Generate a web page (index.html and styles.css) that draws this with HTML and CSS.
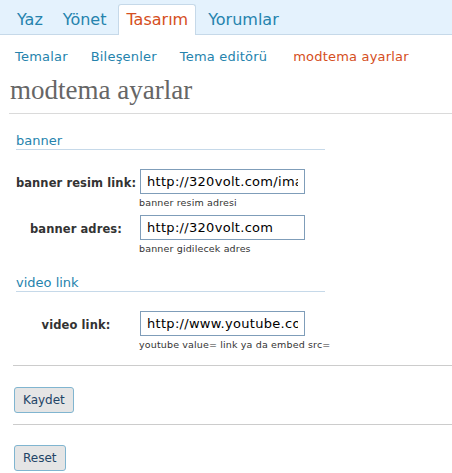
FILE: index.html
```html
<!DOCTYPE html>
<html lang="tr">
<head>
<meta charset="utf-8">
<title>modtema ayarlar</title>
<link rel="stylesheet" href="styles.css">
</head>
<body>
<div class="topnav">
  <a class="tab">Yaz</a>
  <a class="tab">Yönet</a>
  <a class="tab active">Tasarım</a>
  <a class="tab">Yorumlar</a>
</div>
<div class="submenu">
  <a class="sub">Temalar</a>
  <a class="sub">Bileşenler</a>
  <a class="sub">Tema editörü</a>
  <a class="sub current">modtema ayarlar</a>
</div>
<div class="wrap">
  <h2 class="title">modtema ayarlar</h2>
</div>
<form class="settings">
  <h3 class="section">banner</h3>
  <div class="field">
    <label class="label">banner resim link:</label>
    <div class="control">
      <input class="text" type="text" value="http://320volt.com/images/banner.gif">
      <div class="desc">banner resim adresi</div>
    </div>
  </div>
  <div class="field">
    <label class="label">banner adres:</label>
    <div class="control">
      <input class="text" type="text" value="http://320volt.com">
      <div class="desc">banner gidilecek adres</div>
    </div>
  </div>
  <h3 class="section second">video link</h3>
  <div class="field">
    <label class="label">video link:</label>
    <div class="control">
      <input class="text" type="text" value="http://www.youtube.com/v/">
      <div class="desc">youtube value= link ya da embed src=</div>
    </div>
  </div>
  <div class="rule first"></div>
  <button class="btn" type="button">Kaydet</button>
  <div class="rule"></div>
  <button class="btn reset" type="button">Reset</button>
</form>
</body>
</html>
```
FILE: styles.css
```css
html, body {
  margin: 0;
  padding: 0;
  background: #fff;
}
body {
  font-family: "DejaVu Sans", Verdana, sans-serif;
  color: #333;
}
.topnav {
  height: 34px;
  background: #e4f2fd;
  border-bottom: 1px solid #c6d9e9;
  display: flex;
  align-items: flex-end;
  gap: 4px;
  padding-left: 9px;
}
.tab {
  display: block;
  height: 25px;
  margin-bottom: -1px;
  padding: 5px 7px 0;
  border: 1px solid transparent;
  border-bottom: none;
  font-size: 16px;
  line-height: 20px;
  color: #2583ad;
  text-decoration: none;
}
.tab.active {
  background: #fff;
  border-color: #c6d9e9;
  border-radius: 3px 3px 0 0;
  color: #d54e21;
}
.submenu {
  display: flex;
  gap: 23px;
  padding: 12px 0 0 15px;
  font-size: 13px;
  line-height: 19px;
  letter-spacing: 0.2px;
}
.sub {
  color: #2583ad;
  text-decoration: none;
}
.sub.current {
  color: #d54e21;
  margin-left: 3px;
}
.wrap {
  margin: 9px 0 0 9px;
  border-bottom: 1px solid #dadada;
  padding: 0 0 8px 1px;
}
.title {
  margin: 0;
  font-family: "Liberation Serif", "Times New Roman", serif;
  font-weight: normal;
  font-size: 27px;
  line-height: 30px;
  color: #666;
}
.settings {
  padding-left: 13px;
  margin: 0;
}
.section {
  margin: 19px 0 0 3px;
  width: 309px;
  border-bottom: 1px solid #c6d9e9;
  font-size: 13px;
  font-weight: normal;
  line-height: 16px;
  color: #2583ad;
}
.section.second {
  margin-top: 21px;
}
.field {
  display: flex;
  margin-top: 7px;
}
.section + .field {
  margin-top: 19px;
}
.label {
  width: 126px;
  margin-right: 1px;
  padding-top: 8px;
  text-align: center;
  font-size: 11.5px;
  line-height: 13px;
  font-weight: bold;
  letter-spacing: 0.1px;
  color: #333;
}
.control {
  display: flex;
  flex-direction: column;
}
.text {
  box-sizing: border-box;
  width: 165px;
  height: 25px;
  margin: 0;
  padding: 0 6px;
  border: 1px solid #7f9db9;
  background: #fff;
  font-family: "DejaVu Sans", Verdana, sans-serif;
  font-size: 13px;
  letter-spacing: 0.3px;
  color: #000;
  outline: none;
}
.desc {
  margin: 3px 0 0 -1px;
  font-size: 9.5px;
  line-height: 11px;
  letter-spacing: 0.15px;
  color: #333;
}
.rule {
  height: 1px;
  background: #ccc;
  margin-top: 11px;
}
.rule.first {
  margin-top: 15px;
}
.btn {
  display: block;
  box-sizing: border-box;
  height: 26px;
  margin: 21px 0 0 1px;
  padding: 0 8px;
  border: 1px solid #80b5d0;
  border-radius: 3px;
  background: #e5e5e5;
  font-family: "DejaVu Sans", Verdana, sans-serif;
  font-size: 12px;
  line-height: 24px;
  color: #246;
}
.btn.reset {
  margin-top: 20px;
}
```
